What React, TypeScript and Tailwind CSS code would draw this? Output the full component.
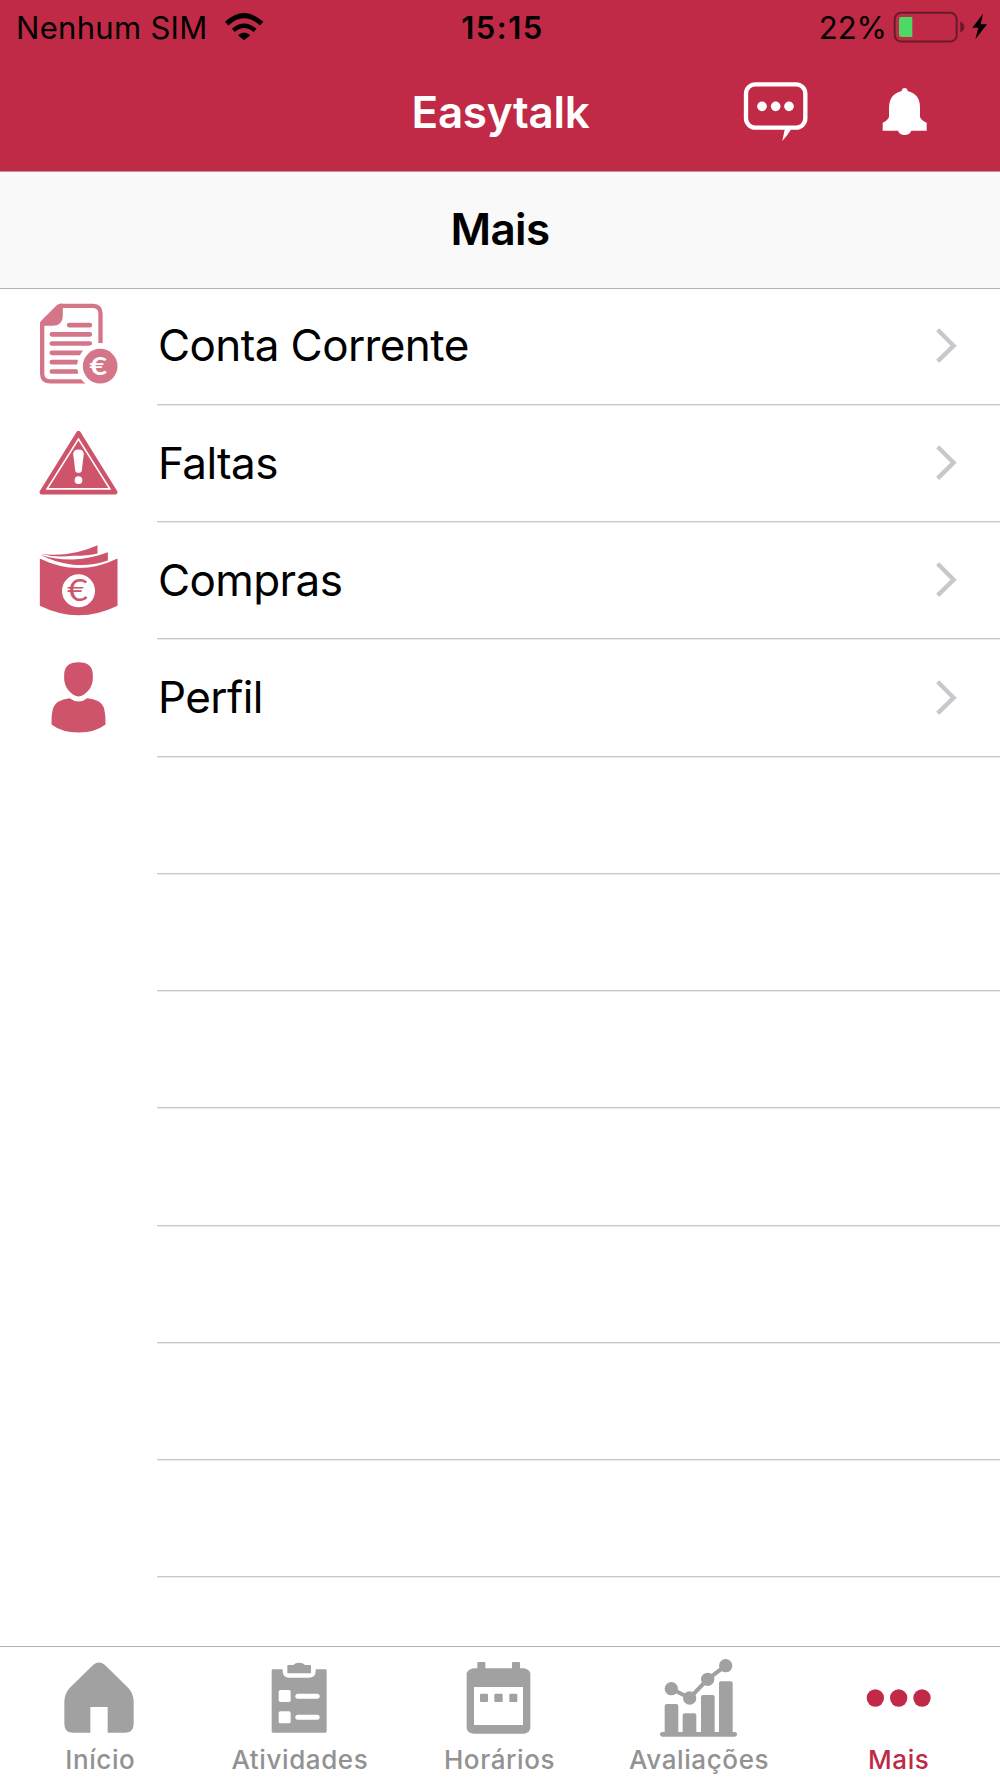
import React from 'react';

interface MenuItem {
  label: string;
  icon: React.ReactNode;
}

interface Tab {
  label: string;
  icon: React.ReactNode;
  active?: boolean;
}

const WifiIcon = () => (
  <svg className="w-[40px] h-[30px]" viewBox="672 35 120 90" fill="none" stroke="#000">
    <path d="M680 70 Q732 22 785 70" strokeWidth="15" />
    <path d="M700 90 Q732 62 765 90" strokeWidth="13" />
    <path d="M714 105 Q732 88 751 105 L732 120 Z" fill="#000" stroke="none" />
  </svg>
);

const BatteryIcon = () => (
  <svg className="w-[96px] h-[32px]" viewBox="578 34 288 96">
    <rect x="583" y="39.5" width="186" height="86" rx="19" fill="none" stroke="#681a2a" strokeWidth="6" />
    <path d="M636 52 V112 H603 Q596 112 596 105 V59 Q596 52 603 52 Z" fill="#4cd964" />
    <path d="M780 66 Q792 70 792 82 Q792 94 780 98 Z" fill="#681a2a" />
    <path d="M848 42 L816 84 H834 L825 119 L860 74 H841 Z" fill="#000" />
  </svg>
);

const ChatIcon = () => (
  <svg className="w-[68px] h-[62px]" viewBox="126 243 204 186" fill="#fff">
    <rect x="138" y="253" width="178" height="130" rx="28" fill="none" stroke="#fff" strokeWidth="13" />
    <circle cx="186" cy="319" r="14.5" />
    <circle cx="227" cy="319" r="14.5" />
    <circle cx="267" cy="319" r="14.5" />
    <path d="M255 384 H276 Q264 404 247 423 Z" />
  </svg>
);

const BellIcon = () => (
  <svg className="w-[50px] h-[62px]" viewBox="540 243 150 186" fill="#fff">
    <path d="M605 273 Q606 264 614 264 Q622 264 623 273 Q660 282 660 322 V350 Q663 361 680 368 V392 H634 Q629 405 614 405 Q599 405 594 392 H548 V368 Q564 361 567 350 V322 Q568 282 605 273 Z" />
  </svg>
);

const AccountIcon = () => (
  <svg className="w-[80px] h-[96px]" viewBox="117.5 54.6 240 288" fill="#d57588">
    <path d="M181 78 H280 Q302 79 302 101 V191 M258 304.500 H150 Q127 304 127 281 V132" fill="none" stroke="#d57588" strokeWidth="13" />
    <path d="M181 71.500 H189 V108 Q189 138 158 138 H120.500 V128 Q123 123 130 117 L170 77 Q175 72 181 71.500 Z" />
    <g stroke="#d57588" strokeWidth="14" strokeLinecap="round">
      <path d="M208 136 H270 M156 163.500 H270 M156 191 H270" />
      <path d="M156 219 H247 M156 247 H232 M156 275 H232" />
    </g>
    <path d="M302 190 A69 69 0 0 0 247 302 L262 316 H302 Z" fill="#fff" />
    <circle cx="301" cy="259" r="52" />
    <path d="M302 190 V198" stroke="#fff" strokeWidth="20" />
    <text
      x="269"
      y="286"
      fill="#fff"
      fontSize="77"
      fontWeight="700"
      fontFamily="Lato, sans-serif"
      textLength="53"
      lengthAdjust="spacingAndGlyphs"
    >
      €
    </text>
  </svg>
);

const WarningIcon = () => (
  <svg className="w-[80px] h-[96px]" viewBox="117.5 406.5 240 288">
    <path d="M236 458 L346 635 H126 Z" fill="#cd546b" stroke="#cd546b" strokeWidth="14" strokeLinejoin="round" />
    <path d="M236 476 L330 625 H142 Z" fill="none" stroke="#fff" strokeWidth="5" />
    <path d="M220 520 Q221 507 236 507 Q251 507 252 520 L246 569 Q245 577 236 577 Q227 577 226 569 Z" fill="#fff" />
    <circle cx="236" cy="599" r="11.500" fill="#fff" />
  </svg>
);

const PurchasesIcon = () => (
  <svg className="w-[80px] h-[96px]" viewBox="117.5 37.5 240 288" fill="#cd546b">
    <path d="M121 100 Q210 112 293 74 V99 Q265 106 220 106 Q165 112 121 100 Z" />
    <path d="M121 103 Q165 118 220 117 Q275 114 324 95 V120 Q270 138 215 132 Q165 126 121 103 Z" />
    <path d="M120 114 Q236 171 353 114 V256 Q236 313 120 256 Z" />
    <circle cx="236" cy="211" r="49.500" fill="#fff" />
    <text
      x="202"
      y="242"
      fontSize="90"
      fontFamily="Lato, sans-serif"
      textLength="62"
      lengthAdjust="spacingAndGlyphs"
    >
      €
    </text>
  </svg>
);

const ProfileIcon = () => (
  <svg className="w-[80px] h-[96px]" viewBox="117.5 388.5 240 288" fill="#cd546b">
    <path d="M236 425 Q279 425 279 463 Q281 493 265 511 Q250 528 236 528 Q222 528 207 511 Q191 493 193 463 Q193 425 236 425 Z" />
    <path d="M210 533 Q222 543 236 543 Q250 543 262 533 Q306 537 313 565 Q318 585 317 612 Q286 636 236 636 Q186 636 155 612 Q154 585 159 565 Q168 537 210 533 Z" />
  </svg>
);

const ChevronIcon = () => (
  <svg className="w-[24px] h-[38px]" viewBox="256 140 72 114" fill="none" stroke="#c7c7cc" strokeWidth="13">
    <path d="M264 148 L312 196 L264 243" />
  </svg>
);

const HomeIcon = () => (
  <svg className="w-[100px] h-[84px]" viewBox="149 60 300 252" fill="#a1a1a1">
    <path d="M279 104 Q296 91 313 104 L384 174 Q400 191 400 216 V281 Q400 308 373 308 H322 V231 H270 V308 H219 Q192 308 192 281 V216 Q192 191 208 174 Z" />
  </svg>
);

const ClipboardIcon = () => (
  <svg className="w-[100px] h-[84px]" viewBox="118 60 300 252" fill="#a1a1a1">
    <path d="M190 118 H219 V124 Q219 143 239 143 H298 Q318 143 318 124 V118 H347 Q351 118 351 122 V304 Q351 308 347 308 H190 Q186 308 186 304 V122 Q186 118 190 118 Z" />
    <path d="M236 105 H251 Q257 98 268 98 Q280 98 286 105 H301 Q304 105 304 108 V130 H233 V108 Q233 105 236 105 Z" />
    <g fill="#fff">
      <rect x="207" y="180" width="36" height="36" rx="5" />
      <rect x="207" y="244" width="36" height="36" rx="5" />
      <rect x="257" y="191" width="73" height="15" rx="7.500" />
      <rect x="257" y="254.500" width="73" height="15" rx="7.500" />
    </g>
  </svg>
);

const CalendarIcon = () => (
  <svg className="w-[100px] h-[84px]" viewBox="117 60 300 252" fill="#a1a1a1">
    <rect x="202" y="96" width="24" height="30" rx="3" />
    <rect x="306" y="96" width="24" height="30" rx="3" />
    <path d="M190 115 H342 Q358 118 361 130 V294 Q359 309 342 311 H190 Q172 309 170 294 V130 Q174 118 190 115 Z" />
    <rect x="192" y="171" width="147" height="114" fill="#fff" />
    <rect x="210" y="191" width="24" height="25" rx="3" />
    <rect x="253" y="191" width="25" height="25" rx="3" />
    <rect x="298" y="191" width="24" height="25" rx="3" />
  </svg>
);

const ChartIcon = () => (
  <svg className="w-[100px] h-[84px] overflow-visible" viewBox="117 60 300 252" fill="#a1a1a1">
    <path d="M184 176 L239 204 L293 148 L347 107" fill="none" stroke="#a1a1a1" strokeWidth="12" />
    <circle cx="184" cy="176" r="20" />
    <circle cx="239" cy="204" r="20" />
    <circle cx="293" cy="148" r="20" />
    <circle cx="347" cy="107" r="20" />
    <rect x="164" y="222" width="41" height="92" rx="6" />
    <rect x="218" y="250" width="41" height="64" rx="6" />
    <rect x="273" y="195" width="41" height="119" rx="6" />
    <rect x="327" y="154" width="41" height="160" rx="6" />
    <rect x="150" y="306" width="231" height="14" rx="7" />
  </svg>
);

const MoreIcon = () => (
  <svg className="w-[100px] h-[84px]" viewBox="144 270 300 252" fill="#c02a46">
    <circle cx="226" cy="414" r="26" />
    <circle cx="296" cy="414" r="26" />
    <circle cx="366" cy="414" r="26" />
  </svg>
);

const menuItems: MenuItem[] = [
  { label: 'Conta Corrente', icon: <AccountIcon /> },
  { label: 'Faltas', icon: <WarningIcon /> },
  { label: 'Compras', icon: <PurchasesIcon /> },
  { label: 'Perfil', icon: <ProfileIcon /> },
];

const emptyRows = [1, 2, 3, 4, 5, 6, 7];

const tabs: Tab[] = [
  { label: 'Início', icon: <HomeIcon /> },
  { label: 'Atividades', icon: <ClipboardIcon /> },
  { label: 'Horários', icon: <CalendarIcon /> },
  { label: 'Avaliações', icon: <ChartIcon /> },
  { label: 'Mais', icon: <MoreIcon />, active: true },
];

const App: React.FC = () => {
  return (
    <div className="flex flex-col w-full h-[1778px] bg-white text-black overflow-hidden font-['Inter',sans-serif]">
      <header className="h-[172px] shrink-0 bg-[#c02a46] border-b border-[#b5979c]">
        <div className="grid grid-cols-[1fr_auto_1fr] items-center h-[54px] pl-4 pr-[11px] text-[31px]">
          <div className="flex items-center gap-[16px]">
            <span className="pt-[2px] tracking-[0.3px]">Nenhum SIM</span>
            <WifiIcon />
          </div>
          <span className="pt-[2px] font-semibold tracking-[1.5px]">15:15</span>
          <div className="flex items-center justify-end gap-[6px]">
            <span className="pt-[2px]">22%</span>
            <BatteryIcon />
          </div>
        </div>
        <div className="grid grid-cols-[1fr_auto_1fr] items-center h-[116px]">
          <span />
          <h1 className="pl-px text-[44px] font-semibold tracking-[-0.3px] text-white">Easytalk</h1>
          <div className="flex justify-end gap-[70px] pr-[70px]">
            <ChatIcon />
            <BellIcon />
          </div>
        </div>
      </header>

      <div className="flex items-center justify-center h-[117px] shrink-0 pb-[2px] bg-[#f9f9f9] border-b border-[#b2b2b2]">
        <h2 className="text-[44px] font-semibold tracking-[-0.6px]">Mais</h2>
      </div>

      <ul className="flex-1 min-h-0 -mt-[1.3px] overflow-hidden">
        {menuItems.map((item) => (
          <li key={item.label} className="flex h-[117.25px]">
            <div className="flex items-center justify-center w-[157px]">{item.icon}</div>
            <div className="flex flex-1 items-center justify-between pr-[41px] border-b border-[#c8c7cc] shadow-[0_1px_0_#ebebed]">
              <span className="pl-px pb-px text-[44px] tracking-[-0.6px]">{item.label}</span>
              <ChevronIcon />
            </div>
          </li>
        ))}
        {emptyRows.map((row) => (
          <li key={row} className="h-[117.25px] ml-[157px] border-b border-[#c8c7cc] shadow-[0_1px_0_#ebebed]" />
        ))}
      </ul>

      <nav className="grid grid-cols-5 h-[132px] shrink-0 pt-[3px] pr-[2px] bg-white border-t border-[#b2b2b2]">
        {tabs.map((tab) => (
          <div key={tab.label} className="flex flex-col items-center">
            {tab.icon}
            <span
              className={`pl-px text-[26px] leading-[51px] font-medium tracking-[0.6px] ${
                tab.active ? 'text-[#c02a46]' : 'text-[#929292]'
              }`}
            >
              {tab.label}
            </span>
          </div>
        ))}
      </nav>
    </div>
  );
};

export default App;
